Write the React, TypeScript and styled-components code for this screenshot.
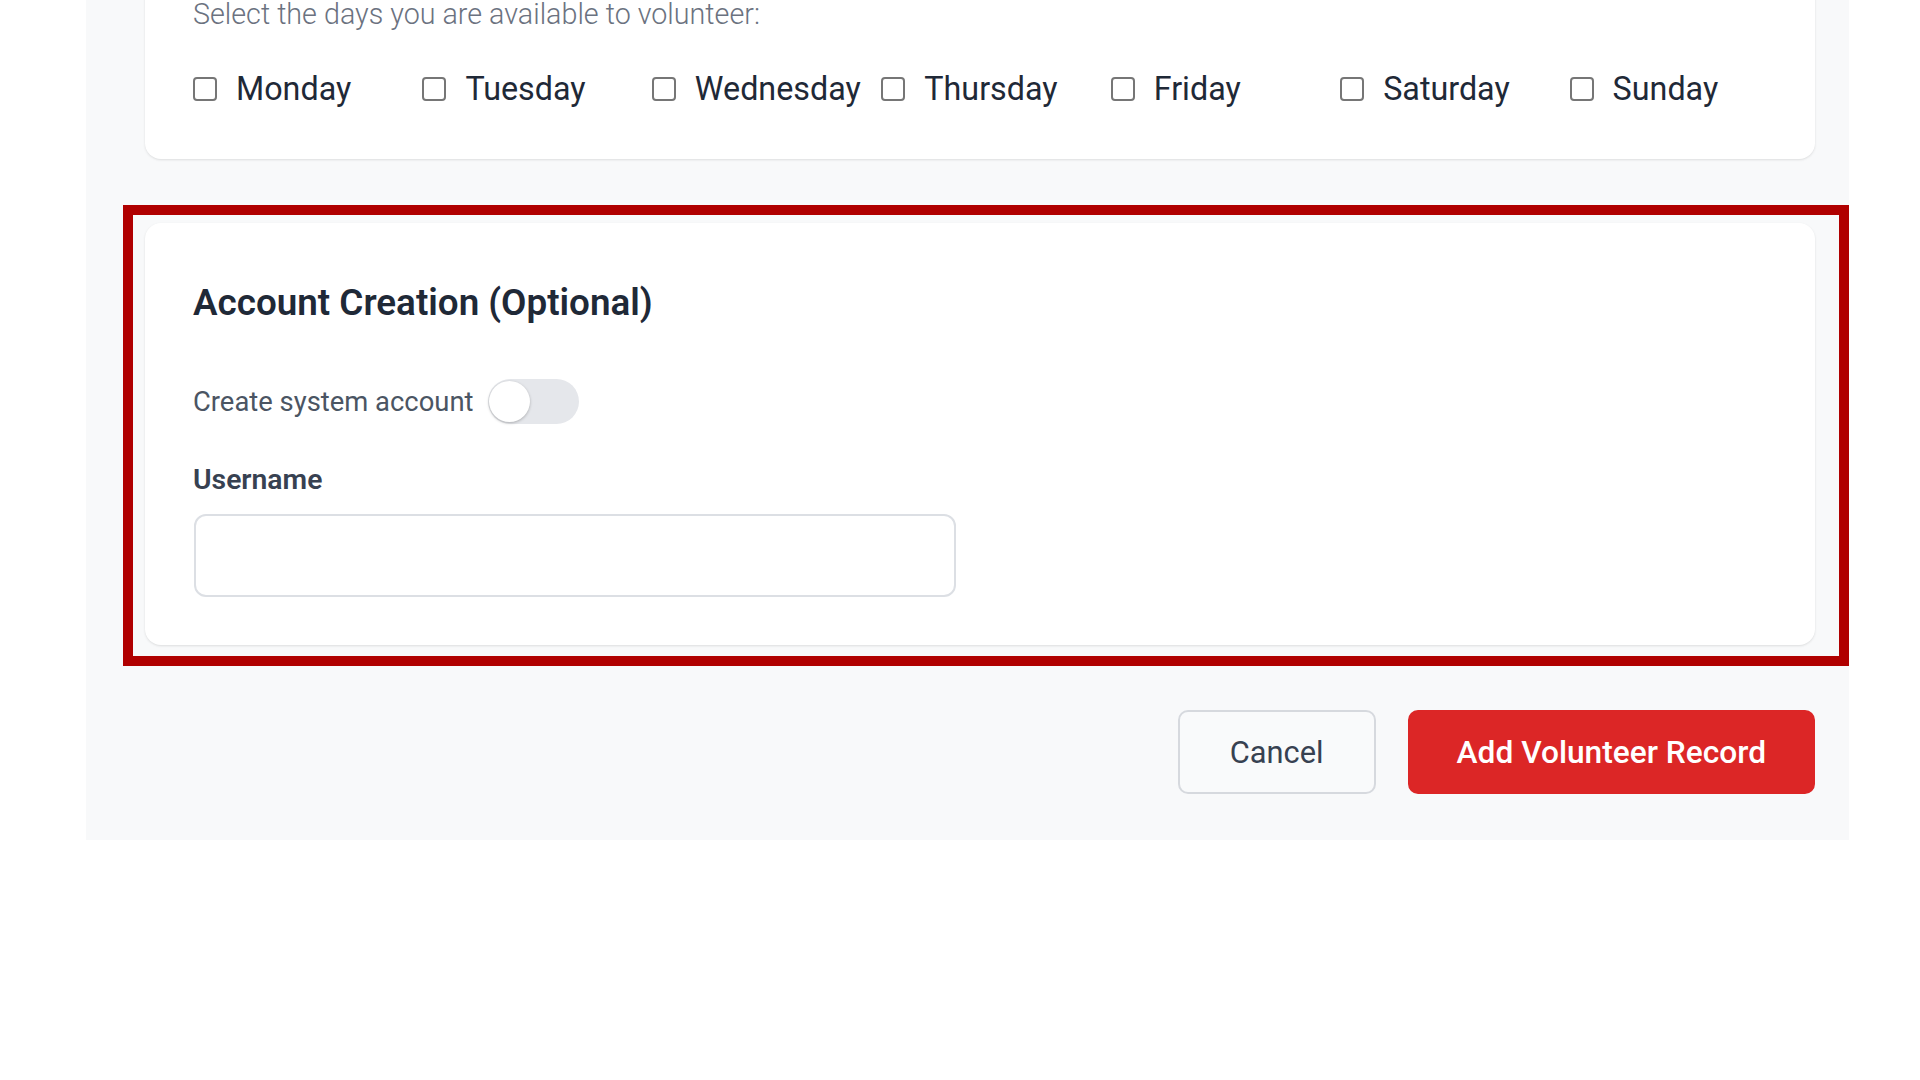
import React, { useState } from 'react';
import styled, { createGlobalStyle } from 'styled-components';

const GlobalStyle = createGlobalStyle`
  html, body {
    margin: 0;
    padding: 0;
    background: #ffffff;
    font-family: "Segoe UI", Roboto, "Noto Sans", sans-serif;
    overflow: hidden;
  }
  * { box-sizing: border-box; }
`;

const Panel = styled.div`
  margin: -103px 0 0 86px;
  width: 1763px;
  background: #f8f9fa;
  padding: 48px 34px 46px 59px;
  display: flex;
  flex-direction: column;
  gap: 64px;
`;

const Card = styled.section`
  position: relative;
  background: #ffffff;
  border-radius: 16px;
  box-shadow: 0 1px 3px rgba(0, 0, 0, 0.08), 0 1px 2px rgba(0, 0, 0, 0.04);
  padding: 48px;
`;

const Highlight = styled.div`
  position: absolute;
  top: -18px;
  left: -22px;
  right: -34px;
  bottom: -21px;
  border: 10px solid #b00000;
  pointer-events: none;
`;

const HelpText = styled.p`
  margin: 0;
  font-size: 28.7px;
  line-height: 42px;
  color: #6b7280;
  font-weight: 300;
`;

const DaysGrid = styled.div`
  display: grid;
  grid-template-columns: repeat(7, minmax(0, 1fr));
  column-gap: 32px;
  margin-top: 31px;
  margin-bottom: -1px;
`;

const DayOption = styled.label`
  display: flex;
  align-items: center;
  gap: 19px;
  font-size: 32.3px;
  line-height: 46px;
  color: #1f2937;
  white-space: nowrap;
  cursor: pointer;
`;

const Checkbox = styled.input`
  appearance: none;
  margin: 0;
  flex: none;
  width: 24px;
  height: 24px;
  border: 2px solid #767676;
  border-radius: 4px;
  background: #ffffff;
`;

const SectionTitle = styled.h3`
  margin: 10px 0 54px;
  font-size: 36.8px;
  line-height: 1.2;
  font-weight: 600;
  color: #1f2937;
`;

const ToggleRow = styled.label`
  display: flex;
  align-items: center;
  gap: 15px;
  font-size: 27.4px;
  color: #4b5563;
  height: 45px;
`;

const Track = styled.span<{ $on: boolean }>`
  position: relative;
  width: 91px;
  height: 45px;
  border-radius: 23px;
  background: ${(p) => (p.$on ? '#dc2626' : '#e5e7eb')};
  cursor: pointer;
`;

const Knob = styled.span<{ $on: boolean }>`
  position: absolute;
  top: 2px;
  left: ${(p) => (p.$on ? '48px' : '1px')};
  width: 41px;
  height: 41px;
  border-radius: 50%;
  background: #ffffff;
  box-shadow: 0 1px 3px rgba(0, 0, 0, 0.25);
`;

const FieldLabel = styled.label`
  display: block;
  margin: 36px 0 14px;
  font-size: 28.3px;
  line-height: 40px;
  font-weight: 600;
  color: #374151;
`;

const TextInput = styled.input`
  display: block;
  width: 762px;
  height: 83px;
  margin-left: 1px;
  border: 2px solid #dcdfe4;
  border-radius: 12px;
  background: #ffffff;
  padding: 0 20px;
  font-size: 28px;
  font-family: inherit;
  outline: none;
`;

const Actions = styled.div`
  display: flex;
  justify-content: flex-end;
  gap: 32px;
  margin-top: 1px;
`;

const Button = styled.button<{ $primary?: boolean }>`
  height: 84px;
  padding: 0 ${(p) => (p.$primary ? '47px' : '50px')};
  border-radius: 10px;
  font-family: inherit;
  font-size: ${(p) => (p.$primary ? '31.7px' : '30.8px')};
  font-weight: ${(p) => (p.$primary ? 500 : 400)};
  border: 2px solid ${(p) => (p.$primary ? '#dc2626' : '#d6d9de')};
  background: ${(p) => (p.$primary ? '#dc2626' : '#f9fafb')};
  color: ${(p) => (p.$primary ? '#ffffff' : '#374151')};
  cursor: pointer;
`;

const days = ['Monday', 'Tuesday', 'Wednesday', 'Thursday', 'Friday', 'Saturday', 'Sunday'];

export default function App() {
  const [createAccount, setCreateAccount] = useState(false);

  return (
    <>
      <GlobalStyle />
      <Panel>
        <Card>
          <HelpText>Select the days you are available to volunteer:</HelpText>
          <DaysGrid>
            {days.map((day) => (
              <DayOption key={day}>
                <Checkbox type="checkbox" />
                {day}
              </DayOption>
            ))}
          </DaysGrid>
        </Card>

        <Card>
          <Highlight />
          <SectionTitle>Account Creation (Optional)</SectionTitle>
          <ToggleRow>
            Create system account
            <Track $on={createAccount} onClick={() => setCreateAccount(!createAccount)}>
              <Knob $on={createAccount} />
            </Track>
          </ToggleRow>
          <FieldLabel htmlFor="username">Username</FieldLabel>
          <TextInput id="username" type="text" />
        </Card>

        <Actions>
          <Button type="button">Cancel</Button>
          <Button type="button" $primary>
            Add Volunteer Record
          </Button>
        </Actions>
      </Panel>
    </>
  );
}
